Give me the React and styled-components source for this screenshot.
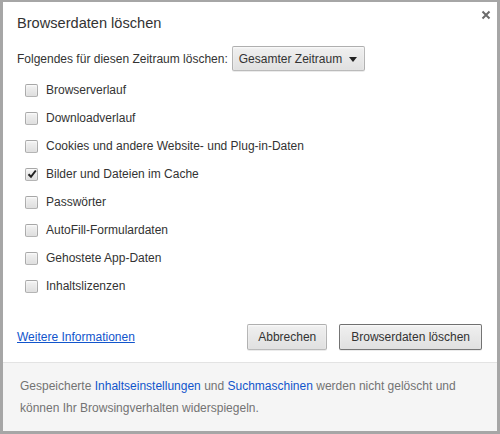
import React, { useState } from "react";
import styled, { createGlobalStyle } from "styled-components";

const GlobalStyle = createGlobalStyle`
  html, body {
    margin: 0;
    padding: 0;
    background: #fff;
  }
  body {
    font-family: "Liberation Sans", Arial, sans-serif;
    font-size: 12px;
    color: #333;
  }
  * {
    box-sizing: border-box;
  }
`;

const Dialog = styled.div`
  width: 500px;
  height: 434px;
  border: 3px solid #a6a6a6;
  border-top-width: 2px;
  background: #fff;
  display: flex;
  flex-direction: column;
`;

const Header = styled.div`
  display: flex;
  justify-content: space-between;
  align-items: flex-start;
  padding: 7px 5px 0 14px;
`;

const Title = styled.h1`
  margin: 4px 0 0;
  font-size: 14.6px;
  font-weight: normal;
  line-height: 20px;
  color: #333;
`;

const CloseButton = styled.button`
  border: 0;
  background: none;
  padding: 0;
  margin: 0;
  width: 12px;
  height: 12px;
  display: flex;
  align-items: center;
  justify-content: center;
  cursor: pointer;
`;

const Body = styled.div`
  padding: 0 15px 0 14px;
`;

const RangeRow = styled.div`
  display: flex;
  align-items: center;
  gap: 4px;
  margin-top: 13px;
  line-height: 16px;
`;

const SelectButton = styled.button`
  display: flex;
  align-items: center;
  justify-content: space-between;
  gap: 7px;
  height: 25px;
  padding: 0 7px 0 6px;
  font-family: inherit;
  font-size: 12px;
  color: #333;
  border: 1px solid rgba(0, 0, 0, 0.22);
  border-radius: 2px;
  background: linear-gradient(#f0f0f0, #e0e0e0);
  box-shadow: 0 1px 0 rgba(0, 0, 0, 0.08), inset 0 1px 2px rgba(255, 255, 255, 0.75);
`;

const Arrow = styled.span`
  width: 0;
  height: 0;
  border-left: 4px solid transparent;
  border-right: 4px solid transparent;
  border-top: 5px solid #222;
  margin-top: 1px;
`;

const OptionList = styled.ul`
  list-style: none;
  margin: 5px 0 0;
  padding: 0 0 0 8px;
`;

const OptionRow = styled.li`
  display: flex;
  align-items: center;
  gap: 8px;
  height: 28px;
  cursor: default;
`;

const Box = styled.span`
  width: 13px;
  height: 13px;
  flex: none;
  border: 1px solid rgba(0, 0, 0, 0.25);
  border-radius: 2px;
  background: linear-gradient(#f2f2f2, #dedede);
  box-shadow: inset 0 1px 2px rgba(255, 255, 255, 0.8);
  display: flex;
  align-items: center;
  justify-content: center;
`;

const Actions = styled.div`
  display: flex;
  align-items: center;
  margin-top: 24px;
  padding-bottom: 12px;
`;

const MoreLink = styled.a`
  color: #15c;
  text-decoration: underline;
  cursor: pointer;
  margin-right: auto;
`;

const Button = styled.button`
  height: 26px;
  padding: 0 ${(props) => (props.$primary ? "11px" : "10px")};
  margin-left: 12px;
  font-family: inherit;
  font-size: 12px;
  color: #333;
  border: 1px solid ${(props) => (props.$primary ? "rgba(0, 0, 0, 0.5)" : "rgba(0, 0, 0, 0.22)")};
  border-radius: 2px;
  background: linear-gradient(#f0f0f0, #e0e0e0);
  box-shadow: 0 1px 0 rgba(0, 0, 0, 0.08), inset 0 1px 2px rgba(255, 255, 255, 0.75);
  cursor: pointer;
`;

const Footer = styled.div`
  flex: 1;
  border-top: 1px solid #e3e3e3;
  background: #f5f5f5;
  padding: 12px 17px 0;
  line-height: 22px;
  color: #737373;
`;

const FooterLink = styled.a`
  color: #15c;
  text-decoration: none;
  cursor: pointer;
`;

const options = [
  { label: "Browserverlauf", checked: false },
  { label: "Downloadverlauf", checked: false },
  { label: "Cookies und andere Website- und Plug-in-Daten", checked: false },
  { label: "Bilder und Dateien im Cache", checked: true },
  { label: "Passwörter", checked: false },
  { label: "AutoFill-Formulardaten", checked: false },
  { label: "Gehostete App-Daten", checked: false },
  { label: "Inhaltslizenzen", checked: false },
];

const Checkmark = () => (
  <svg width="10" height="10" viewBox="0 0 10 10">
    <path d="M1.5 5.2 L4 7.8 L8.8 1.5" fill="none" stroke="#222" strokeWidth="2" />
  </svg>
);

const App = () => {
  const [items, setItems] = useState(options);

  const toggle = (i) => {
    setItems(items.map((item, n) => (n === i ? { ...item, checked: !item.checked } : item)));
  };

  return (
    <>
      <GlobalStyle />
      <Dialog>
        <Header>
          <Title>Browserdaten löschen</Title>
          <CloseButton aria-label="Schließen">
            <svg width="10" height="10" viewBox="0 0 10 10">
              <path d="M1.5 1.5 L8.5 8.5 M8.5 1.5 L1.5 8.5" stroke="#6b6b6b" strokeWidth="2" />
            </svg>
          </CloseButton>
        </Header>
        <Body>
          <RangeRow>
            <span>Folgendes für diesen Zeitraum löschen:</span>
            <SelectButton>
              Gesamter Zeitraum
              <Arrow />
            </SelectButton>
          </RangeRow>
          <OptionList>
            {items.map((item, i) => (
              <OptionRow key={item.label} onClick={() => toggle(i)}>
                <Box>{item.checked && <Checkmark />}</Box>
                {item.label}
              </OptionRow>
            ))}
          </OptionList>
          <Actions>
            <MoreLink>Weitere Informationen</MoreLink>
            <Button>Abbrechen</Button>
            <Button $primary>Browserdaten löschen</Button>
          </Actions>
        </Body>
        <Footer>
          Gespeicherte <FooterLink>Inhaltseinstellungen</FooterLink> und{" "}
          <FooterLink>Suchmaschinen</FooterLink> werden nicht gelöscht und können Ihr
          Browsingverhalten widerspiegeln.
        </Footer>
      </Dialog>
    </>
  );
};

export default App;
